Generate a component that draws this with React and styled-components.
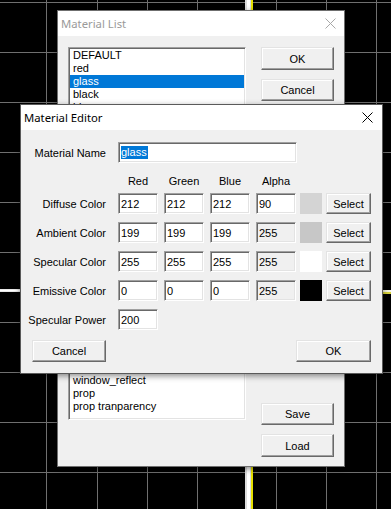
import React from "react";
import styled, { createGlobalStyle } from "styled-components";

const GlobalStyle = createGlobalStyle`
  html, body { margin: 0; padding: 0; background: #000; }
  body { font-family: "Liberation Sans", Arial, sans-serif; overflow: hidden; }
`;

const Desktop = styled.div`
  position: relative;
  width: 391px;
  height: 509px;
  background: #000;
  overflow: hidden;
`;

const Viewport = styled.svg`
  position: absolute;
  inset: 0;
  display: block;
`;

const Window = styled.div`
  position: absolute;
  left: ${(p) => p.$x}px;
  top: ${(p) => p.$y}px;
  width: ${(p) => p.$w}px;
  height: ${(p) => p.$h}px;
  box-sizing: border-box;
  display: flex;
  flex-direction: column;
  background: #f0f0f0;
  border: 1px solid ${(p) => (p.$active ? "#5a5a5a" : "#6f6f6f")};
  box-shadow: 0 2px 6px rgba(0, 0, 0, 0.45);
`;

const TitleBar = styled.div`
  flex: none;
  height: 25px;
  display: flex;
  align-items: center;
  justify-content: space-between;
  background: #fff;
  padding-left: 3px;
  font-family: "Noto Sans", "Open Sans", sans-serif;
  font-size: 11.3px;
  color: ${(p) => (p.$active ? "#000" : "#9a9a9a")};
`;

const CloseBox = styled.div`
  width: ${(p) => p.$w}px;
  height: 100%;
  display: flex;
  align-items: center;
  justify-content: center;
`;

const ListBody = styled.div`
  flex: 1;
  display: flex;
  gap: 15px;
  padding: 11px 10px 9px 10px;
`;

const ListBox = styled.div`
  flex: none;
  width: 178px;
  height: 373px;
  box-sizing: border-box;
  background: #fff;
  border: 1px solid;
  border-color: #a0a0a0 #fff #fff #a0a0a0;
  box-shadow: inset 1px 1px #696969, inset -1px -1px #e3e3e3;
  padding: 1px;
  overflow: hidden;
`;

const ListItem = styled.div`
  height: 13px;
  line-height: 13px;
  padding-left: 3px;
  font-size: 11px;
  white-space: nowrap;
  color: ${(p) => (p.$selected ? "#fff" : "#000")};
  background: ${(p) => (p.$selected ? "#0078d7" : "transparent")};
`;

const ButtonColumn = styled.div`
  flex: none;
  width: 73px;
  display: flex;
  flex-direction: column;
  justify-content: space-between;
`;

const ButtonGroup = styled.div`
  display: flex;
  flex-direction: column;
  gap: 9px;
`;

const Button = styled.button`
  flex: none;
  box-sizing: border-box;
  width: ${(p) => p.$w}px;
  height: ${(p) => p.$h}px;
  margin: 0;
  margin-left: ${(p) => p.$shift || 0}px;
  padding: 0;
  background: #f0f0f0;
  border: 1px solid;
  border-color: #e3e3e3 #696969 #696969 #e3e3e3;
  box-shadow: inset -1px -1px #a0a0a0, inset 1px 1px #fff;
  font-family: "Liberation Sans", Arial, sans-serif;
  font-size: 11px;
  color: #000;
`;

const EditorBody = styled.div`
  flex: 1;
  display: flex;
  flex-direction: column;
  gap: 8px;
  padding: 12px 11px 0 11px;
`;

const FormRow = styled.div`
  display: flex;
  align-items: center;
  gap: 6px;
  height: 21px;
  font-size: 11px;
`;

const HeaderRow = styled.div`
  display: flex;
  align-items: center;
  gap: 6px;
  height: 14px;
  margin: 3px 0 -3px 0;
  font-size: 11px;
`;

const Label = styled.div`
  flex: none;
  width: 80px;
  box-sizing: border-box;
  padding-right: 6px;
  display: flex;
  justify-content: flex-end;
  white-space: nowrap;
  color: #000;
`;

const ColumnHead = styled.div`
  flex: none;
  width: 40px;
  text-align: center;
  color: #000;
`;

const Field = styled.div`
  flex: none;
  box-sizing: border-box;
  width: ${(p) => p.$w}px;
  height: 21px;
  background: ${(p) => (p.$readOnly ? "#f0f0f0" : "#fff")};
  border: 1px solid;
  border-color: #a0a0a0 #fff #fff #a0a0a0;
  box-shadow: inset 1px 1px #696969, inset -1px -1px #e3e3e3;
  padding: 0 2px;
  display: flex;
  align-items: center;
  font-size: 11px;
  color: #000;
  white-space: nowrap;
`;

const Selection = styled.span`
  background: #0078d7;
  color: #fff;
  line-height: 13px;
  padding: 0 1px 0 0;
`;

const Swatch = styled.div`
  flex: none;
  width: 22px;
  height: 21px;
  margin-left: -2px;
  background: ${(p) => p.$color};
`;

const ButtonRow = styled.div`
  display: flex;
  justify-content: space-between;
  margin-top: 2px;
`;

function CloseIcon({ color }) {
  return (
    <svg width="11" height="11" viewBox="0 0 11 11">
      <path d="M0.5 0.5 L10.5 10.5 M10.5 0.5 L0.5 10.5" stroke={color} strokeWidth="1" fill="none" />
    </svg>
  );
}

function Grid() {
  const vx = [46, 97, 147, 197, 276, 326, 376];
  const hy = [2, 52, 102, 152, 202, 252, 322, 372, 422, 472];
  return (
    <Viewport width="391" height="509" viewBox="0 0 391 509">
      {vx.map((x) => (
        <line key={"v" + x} x1={x + 0.5} y1="0" x2={x + 0.5} y2="509" stroke="#6f6f6f" strokeWidth="1" />
      ))}
      {hy.map((y) => (
        <line key={"h" + y} x1="0" y1={y + 0.5} x2="391" y2={y + 0.5} stroke="#6f6f6f" strokeWidth="1" />
      ))}
      <rect x="0" y="289" width="250" height="3" fill="#e8e8e8" />
      <rect x="0" y="290" width="250" height="1" fill="#ffffff" />
      <rect x="250" y="290" width="141" height="2" fill="#f4f4e0" />
      <rect x="250" y="292" width="141" height="2" fill="#d8d23a" />
      <rect x="245" y="0" width="6" height="509" fill="#dcdcdc" />
      <rect x="247" y="0" width="3" height="509" fill="#ffffff" />
      <rect x="251" y="0" width="2" height="509" fill="#e6e000" />
    </Viewport>
  );
}

/* rows 5..24 sit behind the Material Editor window and are never visible */
const materials = [
  "DEFAULT", "red", "glass", "black", "blue",
  ...Array.from({ length: 20 }, () => ""),
  "window_reflect", "prop", "prop tranparency",
];

const colorRows = [
  { label: "Diffuse Color", v: ["212", "212", "212", "90"], alphaRO: false, color: "#d4d4d4" },
  { label: "Ambient Color", v: ["199", "199", "199", "255"], alphaRO: true, color: "#c7c7c7" },
  { label: "Specular Color", v: ["255", "255", "255", "255"], alphaRO: true, color: "#ffffff" },
  { label: "Emissive Color", v: ["0", "0", "0", "255"], alphaRO: true, color: "#000000" },
];

export default function App() {
  return (
    <Desktop>
      <GlobalStyle />
      <Grid />

      <Window $x={57} $y={10} $w={288} $h={457}>
        <TitleBar>
          <span>Material List</span>
          <CloseBox $w={28}>
            <CloseIcon color="#a8a8a8" />
          </CloseBox>
        </TitleBar>
        <ListBody>
          <ListBox>
            {materials.map((m, i) => (
              <ListItem key={i} $selected={m === "glass"}>
                {m}
              </ListItem>
            ))}
          </ListBox>
          <ButtonColumn>
            <ButtonGroup>
              <Button $w={73} $h={23}>OK</Button>
              <Button $w={73} $h={22}>Cancel</Button>
            </ButtonGroup>
            <ButtonGroup>
              <Button $w={73} $h={22}>Save</Button>
              <Button $w={73} $h={23}>Load</Button>
            </ButtonGroup>
          </ButtonColumn>
        </ListBody>
      </Window>

      <Window $x={20} $y={104} $w={363} $h={270} $active>
        <TitleBar $active>
          <span>Material Editor</span>
          <CloseBox $w={30}>
            <CloseIcon color="#000" />
          </CloseBox>
        </TitleBar>
        <EditorBody>
          <FormRow>
            <Label>Material Name</Label>
            <Field $w={179}>
              <Selection>glass</Selection>
            </Field>
          </FormRow>
          <HeaderRow>
            <Label />
            <ColumnHead>Red</ColumnHead>
            <ColumnHead>Green</ColumnHead>
            <ColumnHead>Blue</ColumnHead>
            <ColumnHead>Alpha</ColumnHead>
          </HeaderRow>
          {colorRows.map((r) => (
            <FormRow key={r.label}>
              <Label>{r.label}</Label>
              {r.v.map((val, i) => (
                <Field key={i} $w={40} $readOnly={i === 3 && r.alphaRO}>
                  {val}
                </Field>
              ))}
              <Swatch $color={r.color} />
              <Button $w={45} $h={21} $shift={-2}>Select</Button>
            </FormRow>
          ))}
          <FormRow>
            <Label>Specular Power</Label>
            <Field $w={40}>200</Field>
          </FormRow>
          <ButtonRow>
            <Button $w={74} $h={22}>Cancel</Button>
            <Button $w={75} $h={22}>OK</Button>
          </ButtonRow>
        </EditorBody>
      </Window>
    </Desktop>
  );
}
